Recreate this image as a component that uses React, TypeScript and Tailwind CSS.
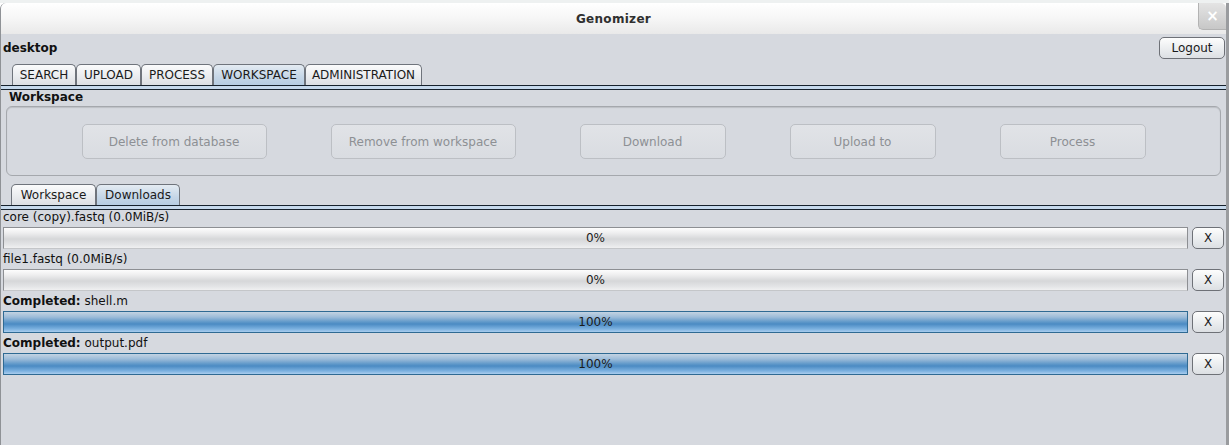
import React from 'react'

const FONT = { fontFamily: '"DejaVu Sans", Verdana, sans-serif' }

const MAIN_TABS = [
  { label: 'SEARCH', w: 'w-[64px]' },
  { label: 'UPLOAD', w: 'w-[65px]' },
  { label: 'PROCESS', w: 'w-[72px]' },
  { label: 'WORKSPACE', w: 'w-[92px]', active: true },
  { label: 'ADMINISTRATION', w: 'w-[117px]' },
]

const ACTIONS = [
  { label: 'Delete from database', w: 'w-[185px]' },
  { label: 'Remove from workspace', w: 'w-[185px]' },
  { label: 'Download', w: 'w-[146px]' },
  { label: 'Upload to', w: 'w-[146px]' },
  { label: 'Process', w: 'w-[146px]' },
]

const DOWNLOADS = [
  { done: false, name: 'core (copy).fastq (0.0MiB/s)', pct: '0%' },
  { done: false, name: 'file1.fastq (0.0MiB/s)', pct: '0%' },
  { done: true, name: 'shell.m', pct: '100%' },
  { done: true, name: 'output.pdf', pct: '100%' },
]

function Tab({ label, w, active }: { label: string; w: string; active?: boolean }) {
  return (
    <div
      className={`${w} h-[21px] flex items-center justify-center rounded-t-[5px] border border-b-0 border-[#6f747c] text-[12px] text-[#1a1a1a] leading-none
        ${active
          ? 'bg-[linear-gradient(to_bottom,#e4ebf2,#c5d6e7_60%,#b7cde2)]'
          : 'bg-[linear-gradient(to_bottom,#fbfbfc,#e9ebee_60%,#dcdfe3)]'}`}
    >
      {label}
    </div>
  )
}

function DoubleLine() {
  return <div className="h-[5px] w-full border-y border-[#16212c] bg-[#c6d9ec]" />
}

function Bar({ done, pct }: { done: boolean; pct: string }) {
  return (
    <div
      className={`flex-1 h-[22px] flex items-center justify-center text-[12px] text-[#1b1b1b] border
        ${done
          ? 'border-[#2f6a93] bg-[linear-gradient(to_bottom,#c3d3e2,#9dbcd9_25%,#5f98c9_50%,#4b8bc3_60%,#7cb1e0_85%,#a9cdee)]'
          : 'border-[#8d8f93] border-b-[#c4c6c9] bg-[linear-gradient(to_bottom,#fdfdfd,#eeeeef_25%,#d6d7d9_55%,#e2e3e5_80%,#f0f0f1)]'}`}
    >
      {pct}
    </div>
  )
}

export default function App() {
  return (
    <div className="w-[1229px] h-[445px] overflow-hidden bg-white flex flex-col" style={FONT}>
      {/* strip of the window behind */}
      <div className="h-[3px] bg-[#eef1f1]" />

      <div className="flex-1 flex flex-col border-l border-r-[3px] border-l-[#8f9296] border-r-[#9a9c9f] bg-[#d6d9df] rounded-tl-[6px] overflow-hidden">
        {/* title bar */}
        <div className="relative h-[31px] flex items-center justify-center bg-[linear-gradient(to_bottom,#ffffff,#f6f6f6_50%,#e9e9e9)]">
          <span className="text-[12px] font-bold text-[#303030] tracking-[0.3px]">Genomizer</span>
          <div className="absolute right-0 top-0 w-[28px] h-[27px] rounded-bl-[5px] rounded-tr-[5px] border-l border-b border-[#b3b3b3] bg-[linear-gradient(to_bottom,#e4e4e4,#c7c7c7)] flex items-center justify-center text-white font-bold text-[15px] leading-none">
            ×
          </div>
        </div>

        {/* user row */}
        <div className="h-[22px] mt-[3px] flex items-center justify-between pl-[2px] pr-[1px]">
          <span className="text-[12px] font-bold text-[#111]">desktop</span>
          <button className="w-[66px] h-[22px] rounded-[5px] border border-[#6e7177] bg-[linear-gradient(to_bottom,#fdfdfd,#eceef0_50%,#dcdfe3)] text-[12px] text-[#1a1a1a]">
            Logout
          </button>
        </div>

        {/* main tabs */}
        <div className="mt-[5px] pl-[11px] flex">
          {MAIN_TABS.map(t => <Tab key={t.label} {...t} />)}
        </div>
        <DoubleLine />

        {/* workspace panel */}
        <div className="h-[15px] pl-[8px] text-[12px] font-bold text-[#111] leading-[15px]">Workspace</div>
        <div className="mt-px mx-[5px] h-[70px] rounded-[6px] border border-[#a5a8ad] shadow-[inset_0_1px_1px_rgba(0,0,0,0.12)] flex items-center justify-center gap-[64px] pt-px">
          {ACTIONS.map(a => (
            <button
              key={a.label}
              className={`${a.w} h-[35px] rounded-[5px] border border-[#bcbfc4] bg-[linear-gradient(to_bottom,#e1e3e7,#d9dce1)] text-[12px] text-[#8d9094]`}
            >
              {a.label}
            </button>
          ))}
        </div>

        {/* sub tabs */}
        <div className="mt-[8px] pl-[10px] flex">
          <Tab label="Workspace" w="w-[85px]" />
          <Tab label="Downloads" w="w-[84px]" active />
        </div>
        <DoubleLine />

        {/* downloads list */}
        <div className="-mt-[3px] flex flex-col px-[2px]">
          {DOWNLOADS.map((d, i) => (
            <div key={i} className="flex flex-col">
              <div className="h-[20px] leading-[20px] text-[12px] text-[#111] whitespace-nowrap">
                {d.done ? (
                  <>
                    <span className="font-bold">Completed:</span> {d.name}
                  </>
                ) : (
                  d.name
                )}
              </div>
              <div className="flex items-center gap-[4px]">
                <Bar done={d.done} pct={d.pct} />
                <button className="w-[32px] h-[22px] rounded-[5px] border border-[#6e7177] bg-[linear-gradient(to_bottom,#fdfdfd,#eceef0_50%,#dcdfe3)] text-[12px] text-[#1a1a1a]">
                  X
                </button>
              </div>
            </div>
          ))}
        </div>
      </div>
    </div>
  )
}
